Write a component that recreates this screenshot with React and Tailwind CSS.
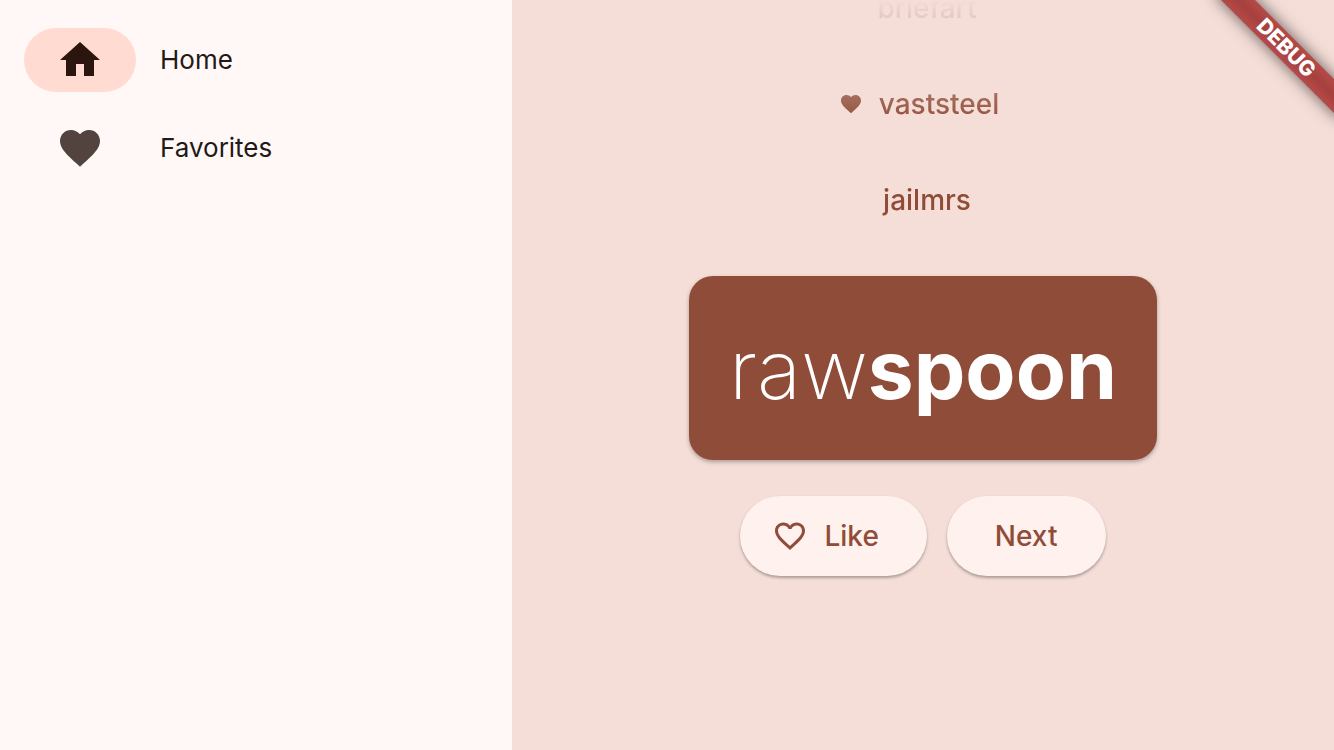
import { MdHome, MdFavorite, MdFavoriteBorder } from "react-icons/md";

const destinations = [
  { label: "Home", icon: MdHome, selected: true },
  { label: "Favorites", icon: MdFavorite, selected: false },
];

const history = [
  { pair: "briefart", liked: false },
  { pair: "vaststeel", liked: true },
  { pair: "jailmrs", liked: false },
];

function NavigationRail() {
  return (
    <nav className="flex w-[512px] shrink-0 flex-col gap-6 bg-[#fff8f6] px-6 py-7">
      {destinations.map(({ label, icon: Icon, selected }) => (
        <a
          key={label}
          href={"#" + label.toLowerCase()}
          aria-current={selected ? "page" : undefined}
          className="flex items-center gap-6 text-[26px] leading-8 text-[#231917]"
        >
          <span
            className={
              selected
                ? "flex h-16 w-28 items-center justify-center rounded-full bg-[#ffdbd1] text-[#2c150f]"
                : "flex h-16 w-28 items-center justify-center rounded-full text-[#53433f]"
            }
          >
            <Icon className="size-12" />
          </span>
          {label}
        </a>
      ))}
    </nav>
  );
}

function HistoryList() {
  return (
    <ul className="flex min-h-0 flex-[3] flex-col items-center justify-end overflow-hidden [mask-image:linear-gradient(to_bottom,transparent,black_50%)]">
      {history.map(({ pair, liked }) => (
        <li key={pair} className="shrink-0">
          <button className="flex h-24 items-center gap-4 pr-8 pl-6 text-[28px] font-medium">
            <span>{liked && <MdFavorite className="size-6" />}</span>
            {pair}
          </button>
        </li>
      ))}
    </ul>
  );
}

function BigCard() {
  return (
    <h1 className="my-7 rounded-3xl bg-[#8f4c38] px-10 pt-[42px] pb-[38px] text-[82px] leading-[104px] text-white shadow-[0_2px_4px_rgba(0,0,0,0.3)]">
      <span className="font-extralight">raw</span>
      <span className="font-bold">spoon</span>
    </h1>
  );
}

function DebugBanner() {
  return (
    <div className="pointer-events-none absolute top-0 right-0 size-40 overflow-hidden">
      <div className="absolute top-9 -right-10 flex h-6 w-44 rotate-45 items-center justify-center bg-linear-to-b from-[#b54a49] via-[#a6403d] to-[#b54a49] text-[21px] font-extrabold text-white shadow-[0_0_16px_rgba(0,0,0,0.6)]">
        DEBUG
      </div>
    </div>
  );
}

export default function App() {
  return (
    <div className="relative flex h-screen overflow-hidden font-['Inter',sans-serif]">
      <NavigationRail />
      <main className="flex min-w-0 flex-1 flex-col items-center bg-[#f5ded8] text-[#8f4c38]">
        <HistoryList />
        <BigCard />
        <div className="my-2 flex gap-5 text-[28px] font-medium">
          <button className="flex h-20 items-center gap-4 rounded-full bg-[#fff1ed] pr-12 pl-8 shadow-[0_2px_3px_rgba(0,0,0,0.3)]">
            <MdFavoriteBorder className="size-9" />
            Like
          </button>
          <button className="h-20 rounded-full bg-[#fff1ed] px-12 shadow-[0_2px_3px_rgba(0,0,0,0.3)]">
            Next
          </button>
        </div>
        <div className="flex-[2]" />
      </main>
      <DebugBanner />
    </div>
  );
}
